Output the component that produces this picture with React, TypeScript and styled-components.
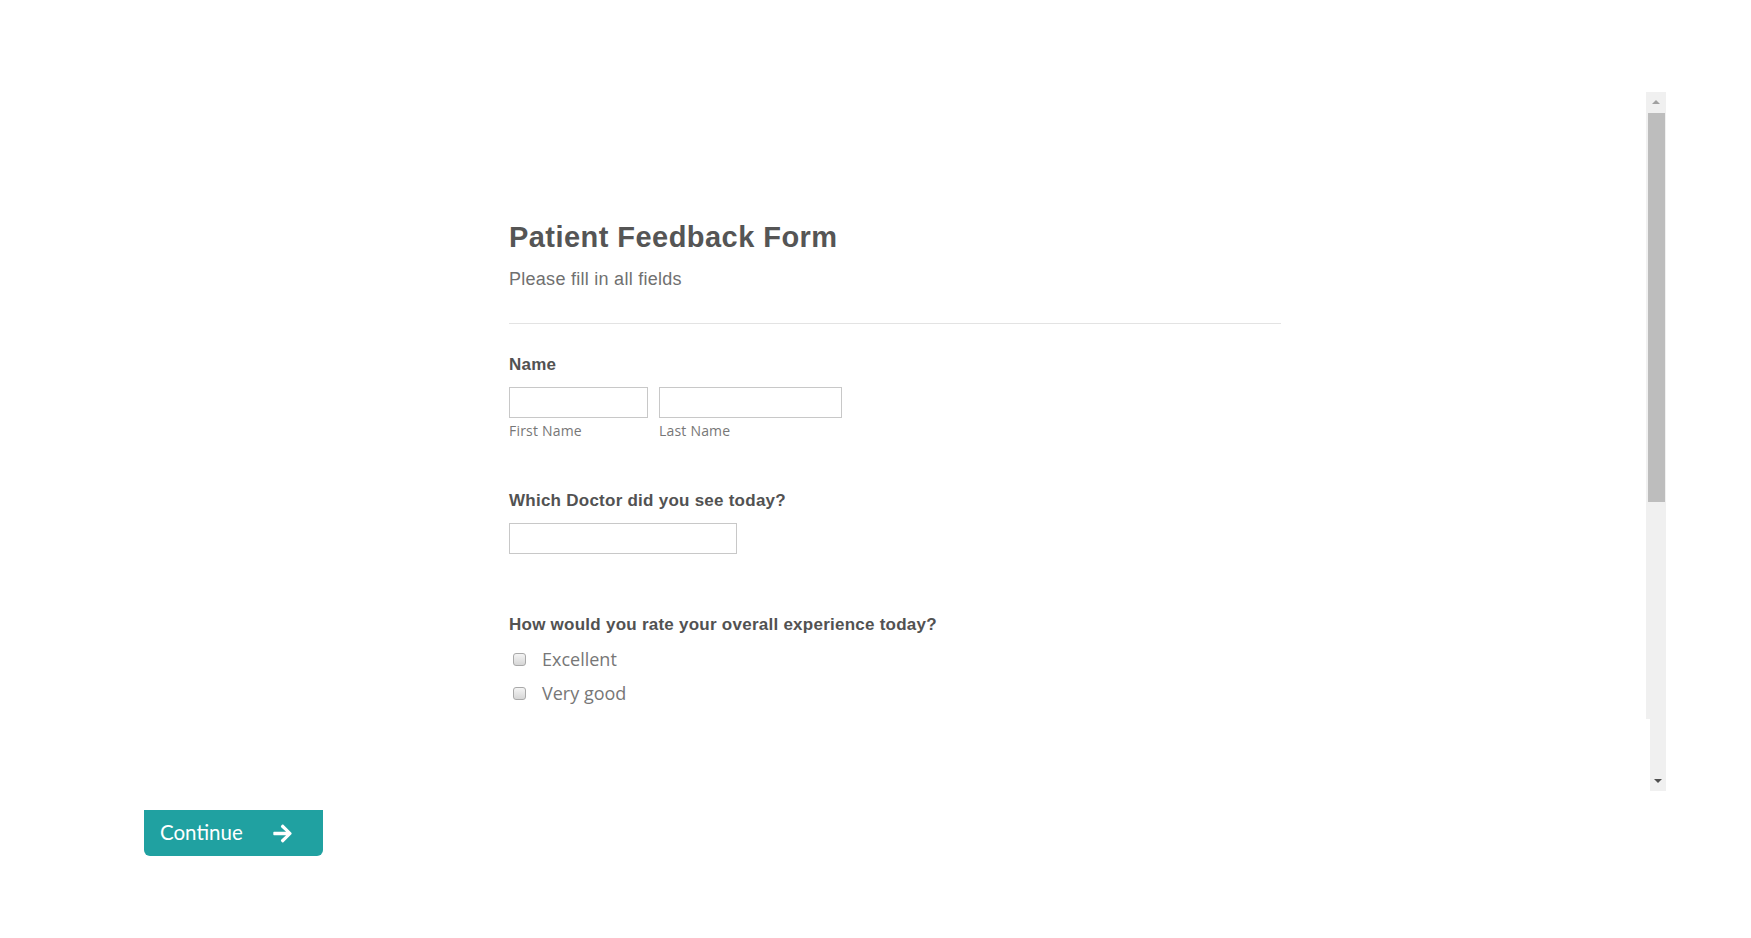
import React from "react";
import styled, { createGlobalStyle } from "styled-components";
import { FaArrowRight } from "react-icons/fa";

const GlobalStyle = createGlobalStyle`
  html, body {
    margin: 0;
    padding: 0;
    background: #ffffff;
  }
  body {
    font-family: "Liberation Sans", Arial, sans-serif;
  }
`;

const Page = styled.div`
  display: flex;
  flex-direction: column;
  padding: 92px 0 0 144px;
`;

const Frame = styled.div`
  display: flex;
  width: 1522px;
  height: 699px;
`;

const Content = styled.div`
  flex: 1;
  padding: 129px 0 0 365px;
  overflow: hidden;
`;

const Form = styled.form`
  display: flex;
  flex-direction: column;
  width: 772px;
  margin: 0;
`;

const Title = styled.h1`
  margin: 0;
  font-size: 29px;
  line-height: 32px;
  letter-spacing: 0.45px;
  font-weight: 700;
  color: #555555;
`;

const Subtitle = styled.p`
  margin: 15px 0 0;
  font-size: 18px;
  line-height: 22px;
  letter-spacing: 0.27px;
  color: #707070;
`;

const Divider = styled.hr`
  margin: 33px 0 0;
  border: none;
  border-top: 1px solid #e3e3e3;
  height: 0;
`;

const Field = styled.div<{ $gap: number }>`
  display: flex;
  flex-direction: column;
  margin-top: ${(p) => p.$gap}px;
`;

const Label = styled.label`
  font-size: 17px;
  line-height: 20px;
  letter-spacing: 0.25px;
  font-weight: 700;
  color: #525252;
`;

const InputRow = styled.div`
  display: flex;
  gap: 11px;
  margin-top: 12px;
`;

const SubField = styled.div`
  display: flex;
  flex-direction: column;
  gap: 4px;
`;

const TextInput = styled.input<{ $w: number }>`
  box-sizing: border-box;
  width: ${(p) => p.$w}px;
  height: 31px;
  border: 1px solid #c8c8c8;
  border-radius: 0;
  padding: 0 6px;
  margin: 0;
  outline: none;
  background: #fff;
`;

const SubLabel = styled.span`
  font-family: "Open Sans", "Liberation Sans", sans-serif;
  font-size: 14px;
  line-height: 18px;
  letter-spacing: 0.2px;
  color: #777777;
`;

const Options = styled.div`
  display: flex;
  flex-direction: column;
  gap: 10px;
  margin-top: 12px;
`;

const Option = styled.label`
  display: flex;
  align-items: center;
  gap: 16px;
  padding-left: 4px;
  font-family: "Open Sans", "Liberation Sans", sans-serif;
  font-size: 18px;
  line-height: 24px;
  color: #777777;
`;

const Check = styled.span`
  box-sizing: border-box;
  width: 13px;
  height: 13px;
  border: 1px solid #a9a9a9;
  border-radius: 3px;
  background: linear-gradient(#f4f4f4, #d6d6d6);
`;

const ScrollBar = styled.div`
  display: flex;
  flex-direction: column;
  width: 20px;
  height: 100%;
`;

const ScrollButton = styled.div<{ $dir: "up" | "down"; $inset?: number }>`
  display: flex;
  align-items: center;
  justify-content: center;
  height: 20px;
  margin-left: ${(p) => p.$inset ?? 0}px;
  background: #f0f0f0;
  &::after {
    content: "";
    width: 0;
    height: 0;
    border-left: 4px solid transparent;
    border-right: 4px solid transparent;
    ${(p) =>
      p.$dir === "up"
        ? "border-bottom: 4px solid #a0a0a0;"
        : "border-top: 4px solid #505050;"}
  }
`;

const Track = styled.div<{ $inset?: number }>`
  display: flex;
  flex-direction: column;
  flex: 1;
  margin-left: ${(p) => p.$inset ?? 0}px;
  background: #f0f0f0;
`;

const Thumb = styled.div`
  height: 389px;
  margin: 1px 1px 0 2px;
  background: #bdbdbd;
`;

const Footer = styled.div`
  display: flex;
  margin-top: 19px;
`;

const ContinueButton = styled.button`
  display: flex;
  align-items: center;
  gap: 29px;
  box-sizing: border-box;
  width: 179px;
  height: 46px;
  padding: 0 0 3px 16px;
  border: none;
  border-radius: 0 0 6px 6px;
  background: #20a1a1;
  color: #ffffff;
  font-family: Lato, "Open Sans", sans-serif;
  font-weight: 400;
  font-size: 20.5px;
  cursor: pointer;
  svg {
    margin-top: 3px;
  }
`;

const App: React.FC = () => {
  return (
    <Page>
      <GlobalStyle />
      <Frame>
        <Content>
          <Form>
            <Title>Patient Feedback Form</Title>
            <Subtitle>Please fill in all fields</Subtitle>
            <Divider />

            <Field $gap={31}>
              <Label>Name</Label>
              <InputRow>
                <SubField>
                  <TextInput $w={139} type="text" />
                  <SubLabel>First Name</SubLabel>
                </SubField>
                <SubField>
                  <TextInput $w={183} type="text" />
                  <SubLabel>Last Name</SubLabel>
                </SubField>
              </InputRow>
            </Field>

            <Field $gap={51}>
              <Label>Which Doctor did you see today?</Label>
              <InputRow>
                <TextInput $w={228} type="text" />
              </InputRow>
            </Field>

            <Field $gap={61}>
              <Label>How would you rate your overall experience today?</Label>
              <Options>
                <Option>
                  <Check />
                  Excellent
                </Option>
                <Option>
                  <Check />
                  Very good
                </Option>
              </Options>
            </Field>
          </Form>
        </Content>
        <ScrollBar>
          <ScrollButton $dir="up" />
          <Track>
            <Thumb />
          </Track>
          <Track $inset={4} style={{ flex: "0 0 52px" }} />
          <ScrollButton $dir="down" $inset={4} />
        </ScrollBar>
      </Frame>
      <Footer>
        <ContinueButton type="button">
          Continue
          <FaArrowRight size={21} />
        </ContinueButton>
      </Footer>
    </Page>
  );
};

export default App;
